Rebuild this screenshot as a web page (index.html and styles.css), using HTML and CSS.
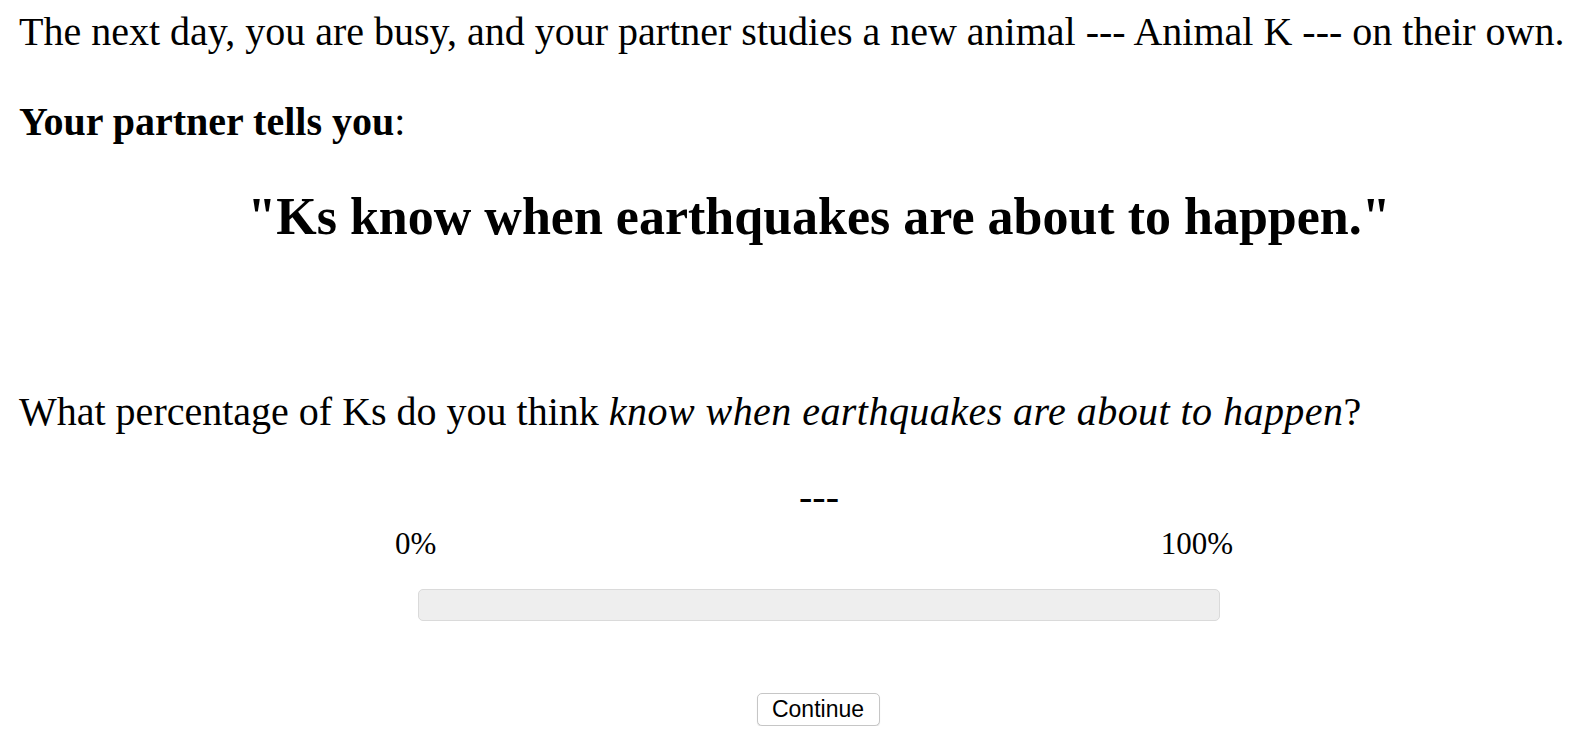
FILE: index.html
```html
<!DOCTYPE html>
<html>
<head>
<meta charset="utf-8">
<link rel="stylesheet" href="styles.css">
</head>
<body>
<div class="page">
  <p class="line">The next day, you are busy, and your partner studies a new animal --- Animal K --- on their own.</p>
  <p class="line lead"><b>Your partner tells you</b>:</p>
  <h2 class="quote">"Ks know when earthquakes are about to happen."</h2>
  <p class="line question">What percentage of Ks do you think <i>know when earthquakes are about to happen</i>?</p>
  <div class="response">
    <div class="value">---</div>
    <div class="labels"><span>0%</span><span>100%</span></div>
    <div class="track"></div>
    <button class="continue" type="button">Continue</button>
  </div>
</div>
</body>
</html>
```
FILE: styles.css
```css
html, body {
  margin: 0;
  padding: 0;
  background: #fff;
  overflow: hidden;
}
.page {
  width: 1600px;
  padding: 8px 0 0 19px;
  font-family: "Liberation Serif", "Times New Roman", serif;
  color: #000;
}
.line {
  font-size: 40px;
  line-height: 47px;
  margin: 0;
  white-space: nowrap;
}
.lead {
  margin-top: 43px;
}
.quote {
  font-size: 52px;
  line-height: 60px;
  font-weight: bold;
  text-align: center;
  margin: 42px 0 0;
}
.question {
  margin-top: 141px;
}
.question i {
  letter-spacing: 0.45px;
}
.response {
  margin-top: 38px;
  text-align: center;
}
.value {
  font-size: 40px;
  line-height: 47px;
}
.labels {
  display: flex;
  justify-content: space-between;
  width: 838px;
  margin: 6px 0 0 376px;
  font-size: 31px;
  line-height: 36px;
}
.track {
  box-sizing: border-box;
  width: 802px;
  height: 32px;
  margin: 27px auto 0;
  background: #eeeeee;
  border: 1px solid #dadada;
  border-radius: 5px;
}
.continue {
  display: block;
  box-sizing: border-box;
  width: 123px;
  height: 33px;
  margin: 72px auto 0;
  padding: 0;
  position: relative;
  left: -1px;
  font-family: "Liberation Sans", Arial, sans-serif;
  font-size: 23px;
  color: #000;
  background: #fff;
  border: 1px solid #c6c6c6;
  border-radius: 5px;
  box-shadow: 0 1px 1px rgba(0,0,0,0.12);
}
```
